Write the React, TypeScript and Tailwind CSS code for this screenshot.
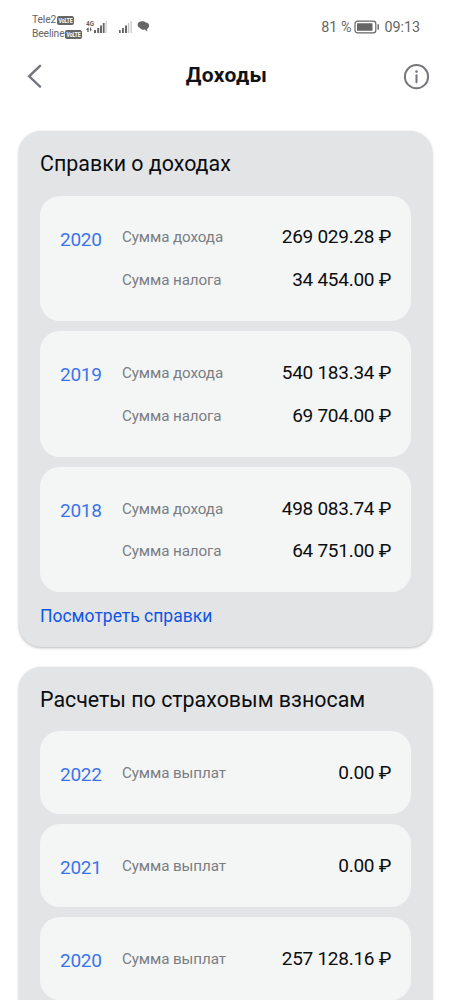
const incomeReports = [
  {
    year: "2020",
    rows: [
      { label: "Сумма дохода", value: "269 029.28 ₽" },
      { label: "Сумма налога", value: "34 454.00 ₽" }
    ]
  },
  {
    year: "2019",
    rows: [
      { label: "Сумма дохода", value: "540 183.34 ₽" },
      { label: "Сумма налога", value: "69 704.00 ₽" }
    ]
  },
  {
    year: "2018",
    rows: [
      { label: "Сумма дохода", value: "498 083.74 ₽" },
      { label: "Сумма налога", value: "64 751.00 ₽" }
    ]
  }
];

const insurancePayments = [
  { year: "2022", rows: [{ label: "Сумма выплат", value: "0.00 ₽" }] },
  { year: "2021", rows: [{ label: "Сумма выплат", value: "0.00 ₽" }] },
  { year: "2020", rows: [{ label: "Сумма выплат", value: "257 128.16 ₽" }] }
];

type Report = (typeof incomeReports)[number];

function VolteBadge() {
  return (
    <svg width="17" height="9" viewBox="0 0 17 9" overflow="visible">
      <rect width="17" height="9" rx="2" fill="#666" />
      <text x="1.5" y="6.9" fontSize="6.5" fontWeight="700" textLength="14" lengthAdjust="spacingAndGlyphs" fill="#fff">VoLTE</text>
    </svg>
  );
}

function StatusBar() {
  return (
    <div className="flex h-[52px] shrink-0 items-start justify-between pl-8 pr-8 text-[#666]">
      <div className="flex">
        <div className="w-[54px] pt-[13px] text-[10.3px] leading-[14px] tracking-[-0.15px]">
          <div className="flex items-center gap-px">
            Tele2 <VolteBadge />
          </div>
          <div className="flex items-center gap-px">
            Beeline <VolteBadge />
          </div>
        </div>
        <svg className="mt-[18px]" width="66" height="18" viewBox="0 0 66 18" fill="#666">
          <text x="0" y="7.5" fontSize="7.8" fontWeight="700" textLength="8" lengthAdjust="spacingAndGlyphs">4G</text>
          <path d="M2 9.5 0 12h1.3v2h1.4v-4zM4 9.5v4l2.4-2H5v-2z" />
          <rect x="8" y="12" width="2" height="3" />
          <rect x="11.2" y="10" width="2" height="5" />
          <rect x="14" y="7.5" width="2" height="7.5" />
          <rect x="16.8" y="5" width="1.8" height="10" />
          <rect x="19.5" y="3" width="1.2" height="12" opacity=".35" />
          <rect x="33" y="12" width="1.7" height="3" />
          <rect x="36" y="10" width="1.9" height="5" />
          <rect x="39" y="7.5" width="2" height="7.5" />
          <rect x="41.8" y="5" width="1.4" height="10" opacity=".4" />
          <rect x="44.5" y="3" width="1.2" height="12" opacity=".4" />
          <path d="M56 3.2c-2.6 0-4.4 1.5-4.4 3.6 0 1.6 1 2.7 2.4 3.2 1 1.6 3 2 4.8 1.6l2.4 1.8-.1-2.7c1.3-.7 2-1.8 2-3 0-1.7-1.3-3-3.2-3.2-1-.9-2.4-1.3-3.9-1.3z" />
        </svg>
      </div>
      <div className="flex items-center pt-[17px] text-[14.3px] leading-5">
        <span>81 %</span>
        <svg className="ml-[3px] mr-1" width="26" height="14" viewBox="0 0 26 14" fill="none">
          <rect x="1" y="1.2" width="20.8" height="11.6" rx="2.6" stroke="#666" strokeWidth="1.2" />
          <rect x="3" y="3.2" width="15.5" height="7.6" rx=".6" fill="#666" />
          <path d="M24.2 4.2v5.6" stroke="#666" strokeWidth="1.4" />
        </svg>
        <span>09:13</span>
      </div>
    </div>
  );
}

function Header() {
  return (
    <header className="flex h-12 shrink-0 items-center justify-between pl-[27px] pr-[22px]">
      <svg width="16" height="24" viewBox="0 0 16 24" fill="none">
        <path d="M13 1.8 2.2 12.3 13 22.6" stroke="#73757d" strokeWidth="2.4" strokeLinecap="round" />
      </svg>
      <h1 className="ml-[7px] text-[21px] font-bold tracking-[0.35px] text-[#121316]">Доходы</h1>
      <svg width="27" height="27" viewBox="0 0 27 27" fill="none" stroke="#76777c">
        <circle cx="13.5" cy="13.7" r="11.6" strokeWidth="2" />
        <path d="M13.5 12.3v7" strokeWidth="2" strokeLinecap="round" />
        <circle cx="13.5" cy="8.6" r="1.3" fill="#76777c" stroke="none" />
      </svg>
    </header>
  );
}

function ReportCard({ report }: { report: Report }) {
  return (
    <div className="flex rounded-[20px] bg-[#f4f6f6] px-5 py-[20px]">
      <div className="h-[42.7px] w-[62px] text-[19px] leading-[47px] tracking-[-0.25px] text-[#3b74ea]">
        {report.year}
      </div>
      <div className="flex-1">
        {report.rows.map((row) => (
          <div key={row.label} className="flex h-[42.7px] items-center justify-between">
            <span className="pt-[1.5px] text-[15.2px] tracking-[-0.1px] text-[#7b7d84]">{row.label}</span>
            <span className="pt-px text-[19px] tracking-[-0.27px] text-[#0c0d0f]">{row.value}</span>
          </div>
        ))}
      </div>
    </div>
  );
}

function Section({ title, reports, link }: { title: string; reports: Report[]; link?: string }) {
  return (
    <section className="rounded-[22px] bg-[#e3e4e6] px-[21px] shadow-[0_1px_3px_rgba(0,0,0,0.28)]">
      <h2 className="h-[64.7px] text-[21.4px] leading-[65px] text-[#0c0d0f]">{title}</h2>
      <div className="flex flex-col gap-[10.3px]">
        {reports.map((report) => (
          <ReportCard key={report.year} report={report} />
        ))}
      </div>
      <div className="h-[54.2px] text-[17.5px] leading-[48px] text-[#0f56e3]">{link}</div>
    </section>
  );
}

export default function App() {
  return (
    <div className="flex h-[1000px] w-[452px] flex-col overflow-hidden bg-white font-['Roboto',sans-serif]">
      <StatusBar />
      <Header />
      <main className="flex flex-col gap-5 pl-[19px] pr-5 pt-[31px]">
        <Section title="Справки о доходах" reports={incomeReports} link="Посмотреть справки" />
        <Section title="Расчеты по страховым взносам" reports={insurancePayments} />
      </main>
    </div>
  );
}
